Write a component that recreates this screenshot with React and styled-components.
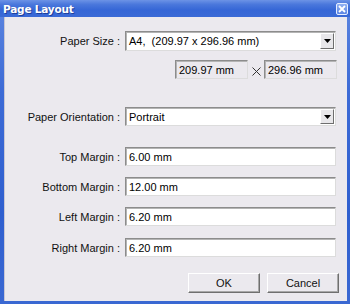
import React from "react";
import styled, { createGlobalStyle } from "styled-components";

const Global = createGlobalStyle`
  html, body { margin: 0; padding: 0; background: #ffffff; }
  body { font-family: "Liberation Sans", Arial, sans-serif; font-size: 11px; }
`;

const Window = styled.div`
  width: 350px;
  height: 304px;
  display: flex;
  flex-direction: column;
  background: linear-gradient(180deg, #5d86e0 0%, #3d6bd6 30%, #2f5fcf 70%, #3a68d2 100%);
  box-sizing: border-box;
`;

const TitleBar = styled.div`
  height: 17px;
  flex: none;
  display: flex;
  align-items: center;
  justify-content: space-between;
  padding: 0 2px 0 3px;
  background: linear-gradient(180deg, #6c93e6 0%, #4b78dc 25%, #3566d6 60%, #3a6ad6 100%);
`;

const Title = styled.span`
  color: #ffffff;
  font-family: "DejaVu Sans", Verdana, sans-serif;
  font-weight: bold;
  font-size: 10.5px;
  letter-spacing: -0.2px;
  text-shadow: 1px 1px 0 #1f3f9a;
`;

const CloseBtn = styled.div`
  width: 12px;
  height: 12px;
  margin-top: 1px;
  box-sizing: border-box;
  border: 1px solid #e6eeff;
  border-radius: 2px;
  background: linear-gradient(180deg, #8fb0f2 0%, #5b85e4 100%);
  display: flex;
  align-items: center;
  justify-content: center;
`;

const Frame = styled.div`
  flex: 1;
  display: flex;
  padding: 0 3px 3px 4px;
`;

const Body = styled.div`
  flex: 1;
  background: #ebe9ee;
  border-left: 1px solid #c9c7d3;
  display: flex;
  flex-direction: column;
  padding-top: 14px;
  box-sizing: border-box;
`;

const Row = styled.div`
  display: flex;
  align-items: center;
  margin-top: ${(p) => p.$mt || 0}px;
  height: ${(p) => p.$h || 19}px;
`;

const Label = styled.div`
  width: 115px;
  text-align: right;
  color: #111;
  padding-right: 5px;
  white-space: nowrap;
  flex: none;
`;

const Field = styled.div`
  width: 211px;
  height: 100%;
  box-sizing: border-box;
  background: ${(p) => (p.$ro ? "#ebe9ee" : "#ffffff")};
  border-top: 1px solid #8c8c8c;
  border-left: 1px solid #8c8c8c;
  border-right: 1px solid #dcdcdc;
  border-bottom: 1px solid #dcdcdc;
  box-shadow: inset 1px 1px 0 #b4b4b4;
  display: flex;
  align-items: center;
  padding-left: 3px;
  color: #000;
  white-space: nowrap;
  position: relative;
`;

const SmallField = styled(Field)`
  width: 73px;
`;

const DimRow = styled(Row)`
  padding-left: 170px;
`;

const Times = styled.div`
  width: 16px;
  height: 100%;
  flex: none;
  display: flex;
  align-items: center;
  justify-content: center;
  padding-top: 3px;
  box-sizing: border-box;
`;

const DropBtn = styled.div`
  position: absolute;
  right: 1px;
  top: 1px;
  bottom: 1px;
  width: 14px;
  box-sizing: border-box;
  background: #e8e7ea;
  border-top: 1px solid #ffffff;
  border-left: 1px solid #ffffff;
  border-right: 1px solid #6e6e6e;
  border-bottom: 1px solid #6e6e6e;
  display: flex;
  align-items: center;
  justify-content: center;
`;

const ButtonRow = styled.div`
  display: flex;
  justify-content: flex-end;
  gap: 7px;
  padding-right: 8px;
  margin-top: 16px;
`;

const Button = styled.div`
  width: 72px;
  height: 20px;
  box-sizing: border-box;
  background: #ebe9ee;
  border-top: 1px solid #ffffff;
  border-left: 1px solid #ffffff;
  border-right: 1px solid #6f6f6f;
  border-bottom: 1px solid #6f6f6f;
  box-shadow: inset -1px -1px 0 #a8a8a8;
  display: flex;
  align-items: center;
  justify-content: center;
  color: #111;
`;

const Arrow = () => (
  <svg width="7" height="4" viewBox="0 0 7 4">
    <path d="M0 0H7L3.5 4Z" fill="#000" />
  </svg>
);

export default function App() {
  return (
    <>
      <Global />
      <Window>
        <TitleBar>
          <Title>Page Layout</Title>
          <CloseBtn>
            <svg width="8" height="8" viewBox="0 0 8 8">
              <path d="M1 1L7 7M7 1L1 7" stroke="#fff" strokeWidth="1.8" />
            </svg>
          </CloseBtn>
        </TitleBar>
        <Frame>
          <Body>
            <Row $h={20}>
              <Label>Paper Size :</Label>
              <Field>
                A4,&nbsp; (209.97 x 296.96 mm)
                <DropBtn><Arrow /></DropBtn>
              </Field>
            </Row>
            <DimRow $mt={9}>
              <SmallField $ro>209.97 mm</SmallField>
              <Times>
                <svg width="9" height="9" viewBox="0 0 9 9">
                  <path d="M0.5 0.5L8.5 8.5M8.5 0.5L0.5 8.5" stroke="#333" strokeWidth="1" />
                </svg>
              </Times>
              <SmallField $ro>296.96 mm</SmallField>
            </DimRow>
            <Row $mt={28}>
              <Label>Paper Orientation :</Label>
              <Field>
                Portrait
                <DropBtn><Arrow /></DropBtn>
              </Field>
            </Row>
            <Row $mt={21}>
              <Label>Top Margin :</Label>
              <Field>6.00 mm</Field>
            </Row>
            <Row $mt={11}>
              <Label>Bottom Margin :</Label>
              <Field>12.00 mm</Field>
            </Row>
            <Row $mt={11}>
              <Label>Left Margin :</Label>
              <Field>6.20 mm</Field>
            </Row>
            <Row $mt={12}>
              <Label>Right Margin :</Label>
              <Field>6.20 mm</Field>
            </Row>
            <ButtonRow>
              <Button>OK</Button>
              <Button>Cancel</Button>
            </ButtonRow>
          </Body>
        </Frame>
      </Window>
    </>
  );
}
